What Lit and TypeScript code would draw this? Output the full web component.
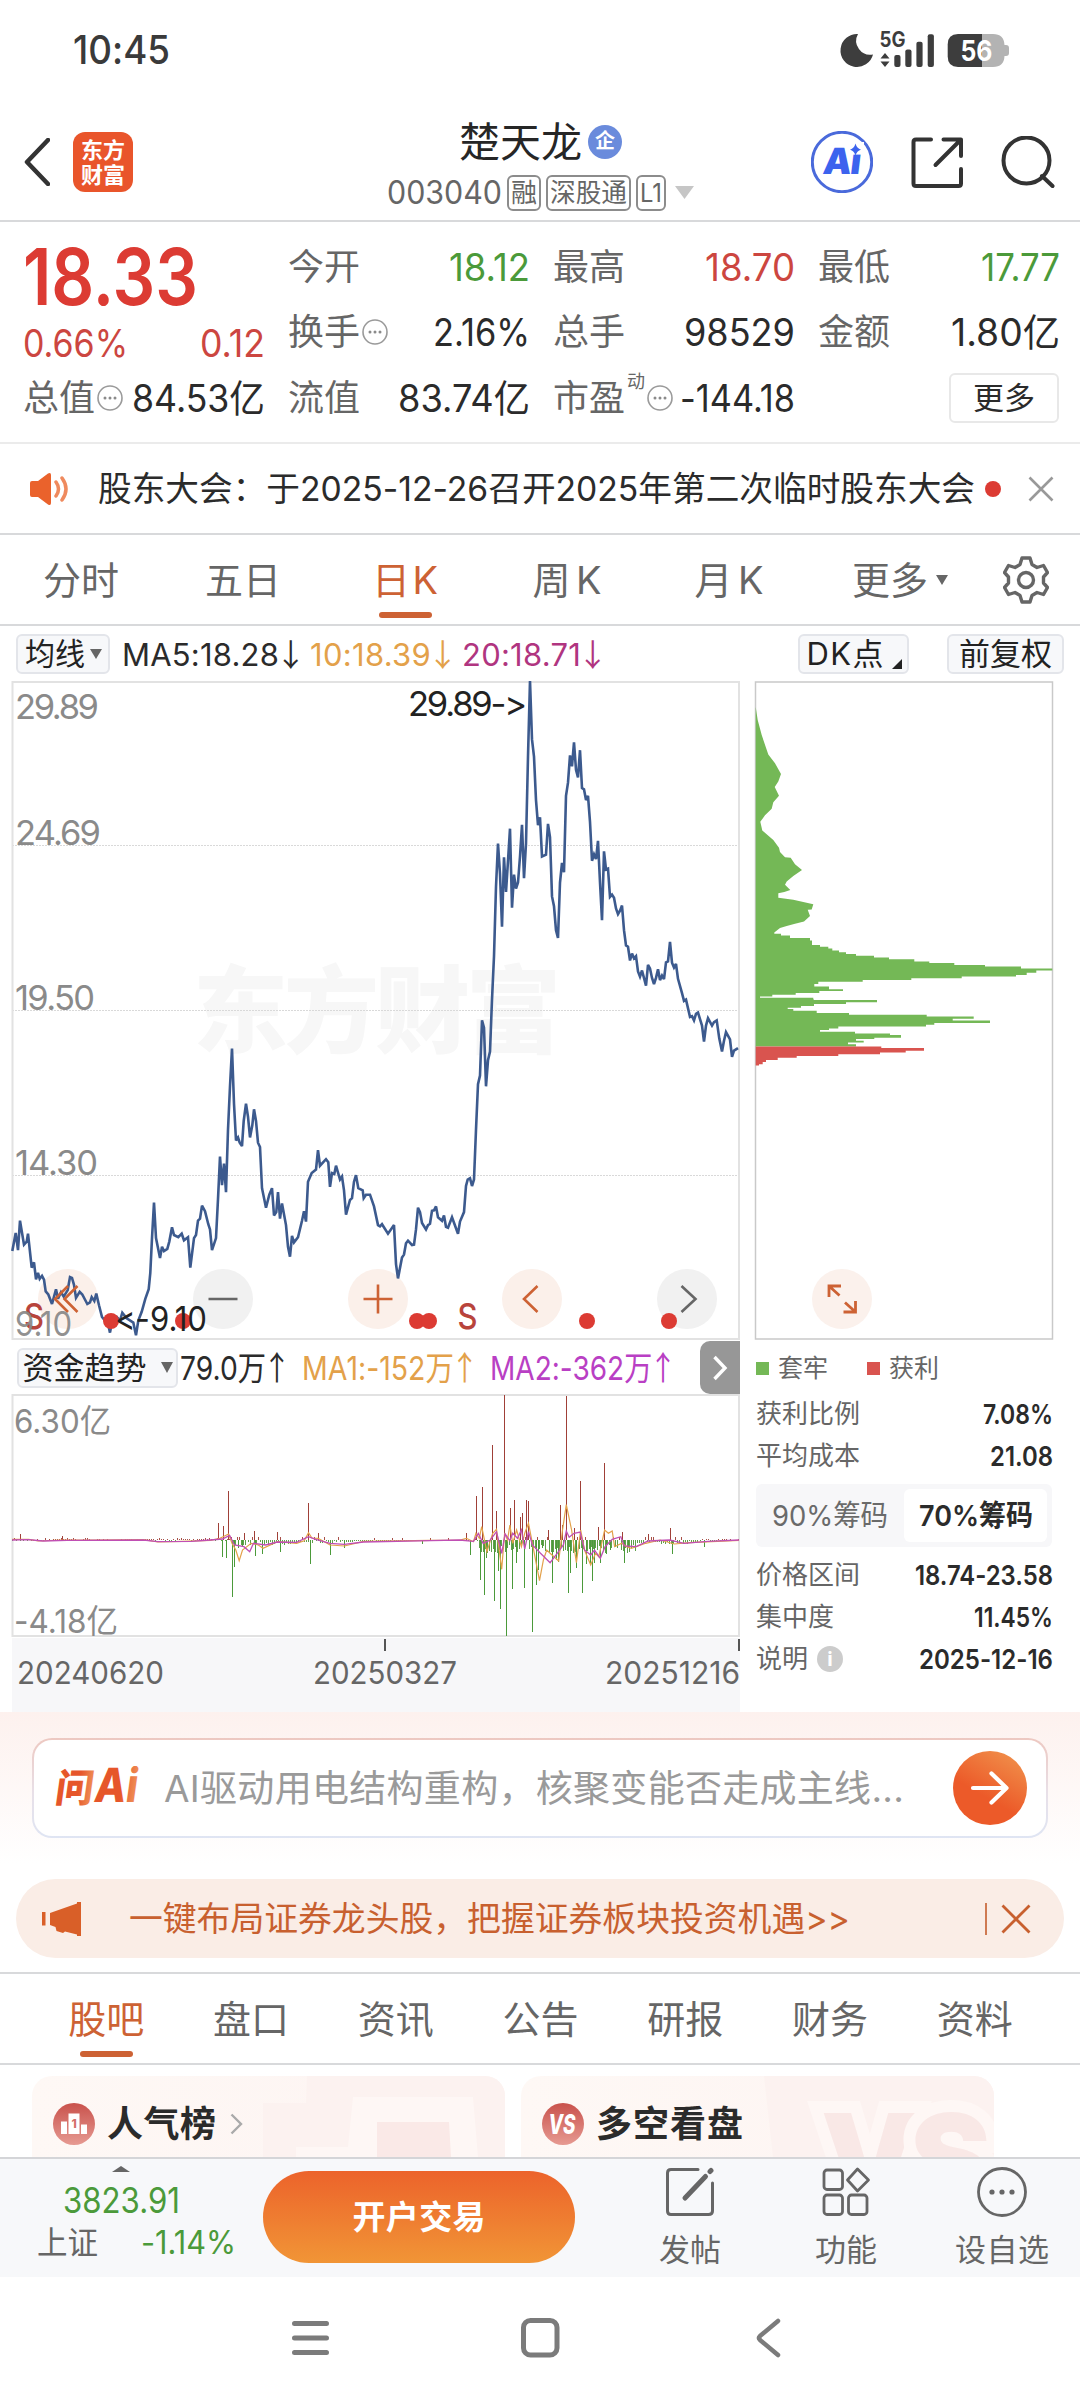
import { LitElement, html, svg, css } from "lit";
import { customElement, property, state, query } from "lit/decorators.js";
import { styleMap } from "lit/directives/style-map.js";

/** A single line of text that fills a given width: tracked out when short, condensed when long. */
@customElement("fit-text")
class FitText extends LitElement {
  @property() text = "";
  @property({ type: Number }) w = 0;
  @state() private spacing = 0;
  @state() private scale = 1;
  @query("span") private span!: HTMLSpanElement;

  static styles = css`
    :host { display: inline-block; white-space: nowrap; line-height: 1; flex: none; }
    .line { display: inline-block; white-space: pre; transform-origin: 0 50%; }
    .arrow { font-family: "Noto Sans CJK SC", sans-serif; margin: 0 -0.14em 0 -0.12em; }
  `;

  firstUpdated() {
    const n = Array.from(this.text).length;
    if (n < 2 || !this.w) return;
    const natural = this.span.getBoundingClientRect().width;
    if (this.w < natural) this.scale = this.w / natural;
    else this.spacing = (this.w - natural) / (n - 1);
    this.style.width = `${this.w}px`;
  }

  render() {
    const body = this.text.split(/([↑↓])/).map((p) =>
      p === "↑" || p === "↓" ? html`<span class="arrow">${p}</span>` : p);
    return html`<span class="line" style=${styleMap({
      letterSpacing: `${this.spacing}px`,
      transform: `scaleX(${this.scale})`,
    })}>${body}</span>`;
  }
}

const PRICE_A = "37,1340 47,1298 54,1338 60,1270 72,1325 80,1318 84,1300 95,1378 102,1366 108,1405 114,1390 119,1404 126,1397 132,1406 137,1433 145,1440 156,1462 168,1428 174,1450 183,1435 191,1445 203,1430 210,1400 216,1402 222,1418 228,1448 239,1434 247,1440 262,1462 270,1458 275,1446 283,1455 289,1438 297,1465 306,1492 325,1510 330,1528 337,1500 350,1492 360,1500 367,1482 380,1495 400,1505 408,1534 415,1500 425,1480 436,1450 446,1428 451,1390 456,1310 462,1228 468,1310 480,1356 486,1330 492,1340 502,1335 508,1318 516,1285 522,1303 535,1308 545,1300 552,1315 564,1308 571,1378 582,1310 588,1303 594,1270 600,1265 606,1235 615,1248 625,1278 630,1290 636,1338 648,1310 654,1220 660,1122 666,1188 672,1138 678,1204 684,1060 690,960 696,873 702,1000 708,1085 714,1078 719,1090 726,1098 731,1040 738,1000 744,1030 750,1078 757,1050 762,1013 768,1040 774,1090 780,1100 786,1195 798,1240 808,1210 816,1195 822,1258 829,1250 834,1204 840,1265 846,1230 858,1280 864,1330 870,1353 876,1305 882,1320 894,1308 906,1270 912,1248 918,1272 924,1180 935,1160 948,1152 954,1107 960,1143 978,1128 985,1135 990,1192 996,1160 1003,1162 1008,1143 1020,1175 1026,1168 1032,1200 1038,1256 1050,1222 1056,1218 1062,1180 1068,1165 1075,1195 1088,1200 1091,1218 1098,1210 1110,1210";
const PRICE_B = "12,1237 24,1280 30,1283 36,1278 54,1300 72,1280 78,1370 84,1403 96,1355 102,1348 108,1322 114,1316 126,1326 132,1325 138,1290 144,1240 150,1250 156,1275 168,1290 174,1280 180,1277 186,1247 192,1246 198,1237 204,1262 216,1270 222,1258 228,1284 234,1286 246,1262 264,1300 270,1272 282,1250 288,1190 293,1175 300,1172 306,1190 312,1175 318,1060 324,955 330,935 336,808 342,825 348,960 354,900 360,880 366,760 372,660 378,500 384,400 390,470 396,592 402,432 408,512 414,440 420,366 426,548 432,472 438,504 444,490 450,430 456,357 462,480 468,400 474,200 480,25 486,160 492,200 498,300 504,358 510,340 516,430 528,426 534,355 540,385 546,522 552,545 558,600 564,618 570,490 576,445 582,466 588,290 594,260 600,197 606,222 612,167 618,230 624,248 630,185 636,272 642,275 648,300 654,290 660,350 666,440 672,425 678,436 684,394 690,490 696,577 702,418 708,460 714,458 720,523 726,518 732,525 738,550 744,563 750,555 756,543 762,600 768,635 774,638 780,670 786,654 792,665 798,660 804,695 810,707 816,693 828,728 834,680 840,688 846,710 852,724 858,710 864,690 870,715 876,705 882,713 888,674 894,672 900,627 906,675 912,686 918,678 924,712 936,745 942,763 948,760 960,800 966,798 972,808 978,793 984,790 996,820 1002,857 1008,820 1014,803 1026,820 1032,812 1040,808 1048,850 1056,880 1062,855 1068,835 1080,852 1086,892 1092,878 1104,872";

const pts = (s: string) => s.split(" ").map((p) => p.split(",").map(Number) as [number, number]);
const priceLine = [...pts(PRICE_A), ...pts(PRICE_B).map(([x, y]) => [x + 1110, y])]
  .map(([x, y]) => `${(x / 3).toFixed(1)},${(y / 2.306 + 670).toFixed(1)}`).join(" ");

const CHIP_TOP = pts("47,85 53,115 65,150 85,195 105,215 123,240 115,257 104,270 117,290 100,305 95,320 75,335 61,350 67,370 100,392 117,410 120,420 135,432 152,433 165,448 186,461 160,475 140,488 135,495 151,507 133,512 115,515 115,525 132,527 160,530 190,535 220,540 215,552 203,553 210,567 192,580 165,585 140,590 120,595 103,605");
const CHIP_STEP = pts("123,608 150,612 210,618 216,624 216,630 240,634 265,638 277,642 297,647 318,651 348,655 402,659 447,663 523,667 568,672 643,676 735,680 843,684 937,688 889,693 860,698 828,703 665,707 514,711 368,715 235,719 223,724 267,730 309,736 238,740 167,745 97,749 60,753 220,756 222,760 411,761 318,766 222,770 183,775 143,779 160,782 230,786 327,791 560,795 701,799 638,804 750,808 583,814 558,818 295,822 267,827 240,830 345,834 450,838 483,842 403,848 348,851 371,855 324,859 348,863 348,868");
const CHIP_RED = pts("424,868 552,872 497,878 420,882 295,886 170,890 113,894 78,899 68,904 57,909 47,912");
const cx = (x: number) => (740 + x / 3).toFixed(1);
const cy = (y: number) => (670 + y / 2.306).toFixed(1);
const steps = (a: [number, number][]) => a.map(([x, y]) => `V${cy(y)}H${cx(x)}`).join("");
const greenChips = `M${cx(47)},${cy(85)}` + CHIP_TOP.map(([x, y]) => `L${cx(x)},${cy(y)}`).join("") + steps(CHIP_STEP) + `H${cx(47)}Z`;
const redChips = `M${cx(47)},${cy(868)}` + steps(CHIP_RED) + "Z";

const FUND_IN = pts("43,612 131,618 457,579 468,588 478,483 511,609 531,603 581,605 645,520 666,610 975,609 996,499 1009,471 1030,345 1038,543 1055,195 1067,533 1076,509 1088,562 1092,549 1101,510 1105,513 1147,600 1172,525 1176,585 1184,198 1201,595 1214,453 1251,591 1264,399 1301,607 1356,612 1402,594");
const FUND_OUT = pts("465,681 473,683 486,800 490,710 498,655 507,652 535,678 548,672 586,665 649,703 691,674 720,655 883,643 984,674 1005,749 1013,795 1017,683 1034,812 1042,722 1046,836 1059,917 1072,776 1080,700 1097,773 1113,906 1122,765 1126,720 1134,655 1155,758 1163,690 1167,695 1188,789 1193,730 1205,713 1217,789 1226,703 1234,705 1239,752 1243,700 1255,700 1268,672 1276,660 1306,700 1314,655 1406,671 1473,652");
const MA_FAST = pts("25,628 60,628 80,633 130,630 200,630 300,629 330,636 380,634 440,631 460,625 478,612 485,640 493,660 500,692 507,660 525,640 540,645 550,655 580,635 620,640 636,632 645,608 652,624 665,625 690,645 720,648 760,634 900,631 960,631 975,625 990,635 995,610 1002,625 1007,590 1018,665 1030,610 1038,598 1049,718 1055,610 1061,630 1066,585 1072,640 1080,600 1090,650 1097,610 1105,580 1113,640 1128,752 1136,690 1143,660 1150,670 1168,693 1176,600 1184,524 1195,600 1205,698 1214,600 1222,660 1235,705 1245,670 1252,680 1264,600 1272,610 1280,603 1285,650 1300,640 1310,650 1320,655 1350,640 1380,630 1410,642 1440,638 1500,634 1545,631");
const MA_SLOW = pts("25,630 60,629 90,633 140,631 300,630 330,635 400,634 440,630 465,627 480,616 490,645 510,650 522,665 530,640 555,645 580,636 620,637 645,620 660,628 690,640 720,643 760,636 900,632 960,630 990,634 1000,610 1010,640 1025,630 1038,605 1049,670 1056,612 1066,632 1072,610 1082,625 1090,600 1097,657 1105,605 1113,645 1130,670 1150,698 1165,670 1178,645 1184,603 1190,622 1200,610 1213,606 1222,660 1235,675 1243,660 1255,685 1265,650 1280,628 1298,620 1305,648 1330,650 1355,633 1400,630 1430,640 1480,634 1545,630");
const fx = (x: number) => (x / 2.0907).toFixed(1);
const fy = (y: number) => (1330 + y / 3).toFixed(1);
const line = (a: [number, number][]) => a.map(([x, y]) => `${fx(x)},${fy(y)}`).join(" ");

/** Small day-to-day flows that fill the space between the large spikes. */
const noise = Array.from({ length: 362 }, (_, i) => {
  const x = 27 + i * 4.2;
  const r = Math.abs(Math.sin(i * 12.9898) * 43758.5453) % 1;
  let amp = 5;
  if (x > 484 && x < 760) amp = 22 - (x - 484) / 18;
  else if (x >= 1000 && x < 1330) amp = 48;
  else if (x >= 1330 && x < 1460) amp = 14;
  const up = x > 484 && x < 1460 ? r > 0.84 : r > 0.5;
  return { x, up, h: (0.3 + r * 0.7) * (up ? Math.min(amp, 9) : amp) };
});

const dots = svg`<circle cx="8" cy="13" r="1.5"/><circle cx="13" cy="13" r="1.5"/><circle cx="18" cy="13" r="1.5"/>`;
const moreIcon = html`<svg class="more-ic" viewBox="0 0 26 26" width="26" height="26"><circle cx="13" cy="13" r="12" fill="none" stroke="#9a9a9a" stroke-width="1.6"/><g fill="#8a8a8a">${dots}</g></svg>`;
const tri = (w: number, h: number, c: string) => html`<svg width=${w} height=${h} viewBox="0 0 10 10" preserveAspectRatio="none"><path d="M0 0H10L5 10Z" fill=${c}/></svg>`;
const ft = (text: string, w: number, cls = "") => html`<fit-text class=${cls} .text=${text} .w=${w}></fit-text>`;

@customElement("app-root")
class AppRoot extends LitElement {
  static styles = css`
    :host {
      display: block; width: 1080px; height: 2400px; overflow: hidden; background: #fff;
      color: #2b2b2b; line-height: 1;
      font-family: Inter, "Noto Sans CJK SC", sans-serif;
      font-feature-settings: "calt" 0;
    }
    * { box-sizing: border-box; }
    svg { display: block; flex: none; }
    .cjk { font-family: "Noto Sans CJK SC", sans-serif; }
    .row { display: flex; align-items: center; }
    .status { display: flex; justify-content: space-between; align-items: center; height: 100px; padding: 0 64px 0 73px; color: #3a3a3a; }
    .time { font-size: 40px; font-weight: 500; }

    .header { display: grid; grid-template-columns: 1fr auto 1fr; align-items: center; height: 122px; padding: 4px 25px 0 22px; border-bottom: 2px solid #d8d9db; }
    .logo { margin-left: 23px; width: 60px; height: 60px; border-radius: 12px; background: #e9552b; color: #fff; font-weight: 700; font-size: 22px; line-height: 25px; text-align: center; padding-top: 4px; }
    .titles { display: flex; flex-direction: column; align-items: center; padding: 8px 0 0 4px; }
    .title { height: 42px; font-size: 41px; color: #262626; gap: 6px; }
    .qi { width: 34px; height: 34px; border-radius: 50%; background: #6a8bdc; color: #fff; font-size: 20px; font-weight: 700; line-height: 32px; text-align: center; }
    .code { margin-top: 11px; height: 37px; gap: 5px; font-size: 32px; color: #666; }
    .tag { display: flex; align-items: center; justify-content: center; border: 2px solid #8c8c8c; border-radius: 6px; height: 36px; padding: 0 2px; font-size: 26px; }
    .code svg { margin-left: 4px; }
    .acts { justify-content: flex-end; gap: 38px; }

    .quote { display: flex; gap: 25px; height: 222px; padding: 12px 0 0 23px; border-bottom: 2px solid #ebebeb; font-size: 38px; }
    .col { width: 240px; }
    .cell { display: flex; justify-content: space-between; align-items: center; height: 65.5px; }
    .cell > fit-text:last-child { margin-right: -2px; }
    .cell.p2 { height: 46px; }
    .cell.p3 { height: 63px; }
    .price { display: flex; align-items: center; height: 86px; font-size: 78px; font-weight: 600; color: #dc3b33; }
    .lab { display: flex; align-items: center; color: #666; font-size: 36px; gap: 2px; }
    .sup { font-size: 18px; align-self: flex-start; margin-top: -7px; }
    .red { color: #cc4640; } .green { color: #4b9a3a; }
    .more { margin-left: auto; margin-right: -1px; width: 110px; height: 50px; border: 2px solid #e8e8e8; border-radius: 6px; display: flex; align-items: center; justify-content: center; font-size: 31px; }

    .notice { display: flex; align-items: center; height: 91px; padding: 0 26px 0 29px; border-bottom: 2px solid #d8d9db; font-size: 34px; }
    .notice fit-text { margin-left: 27px; }
    .notice .rd { width: 16px; height: 16px; border-radius: 50%; background: #dc3b33; margin: 0 27px 0 10px; }

    .tabs { display: flex; align-items: center; height: 91px; font-size: 38px; color: #666; border-bottom: 2px solid #d8d9db; }
    .tab { position: relative; display: flex; justify-content: center; align-items: center; width: 162px; height: 100%; }
    .tabs .drop { padding-left: 18px; }
    .tab svg { margin-left: 8px; }
    .on { color: #cd6234; }
    .on::after { content: ""; position: absolute; left: 50%; bottom: 6px; width: 53px; height: 6px; margin-left: -26.5px; border-radius: 3px; background: #cd6234; }
    .gear { margin-left: 31px; }

    .tools { display: flex; align-items: center; height: 55px; padding: 0 16px; font-size: 31px; }
    .btn { display: flex; align-items: center; justify-content: center; height: 40px; border: 2px solid #e3e5ea; border-radius: 6px; background: #f7f8fa; font-size: 31px; color: #222; }
    .b1 { width: 94px; gap: 5px; margin-right: 12px; }
    .b2 { width: 111px; margin-left: auto; margin-right: 38px; padding-left: 1px; }
    .b2 svg { align-self: flex-end; margin: 0 0 3px 8px; }
    .b3 { width: 117px; }
    .o { color: #e3a14a; margin-left: 8px; } .m { color: #b03580; margin-left: 8px; } .v { color: #b93fc4; }

    .charts { display: flex; height: 1031px; }
    .left { width: 740px; }
    .right { width: 340px; }
    .fundhead { display: flex; align-items: center; height: 53px; padding-left: 17px; font-size: 33px; }
    .fundhead .o, .fundhead .v { margin-left: 15px; }
    .b4 { width: 161px; gap: 14px; margin-right: 2px; font-size: 31px; }
    .next { display: flex; align-items: center; justify-content: center; width: 40px; height: 53px; margin-left: auto; border-radius: 10px 0 0 10px; background: #979797; }
    .axis { position: relative; display: flex; justify-content: space-between; height: 74px; margin-left: 12px; padding: 18px 0 0 5px; background: #f7f7f9; font-size: 31.5px; color: #666; }
    .axis::before, .axis::after { content: ""; position: absolute; top: 1px; width: 2px; height: 12px; background: #555; }
    .axis::before { left: 372px; } .axis::after { right: 0; }
    .axis fit-text { line-height: 34px; }

    .legend { display: flex; align-items: center; height: 52px; padding: 2px 0 0 16px; font-size: 25px; color: #666; }
    .sq { width: 13px; height: 13px; margin-right: 9px; background: #74b856; }
    .sq.r { background: #d9544f; margin-left: 39px; }
    .info { display: flex; align-items: center; justify-content: space-between; height: 42px; width: 297px; margin-left: 16px; font-size: 26px; color: #666; }
    .info b { font-weight: 600; font-size: 27px; color: #2b2b2b; display: flex; }
    .info > span { display: flex; align-items: center; }
    .i { width: 26px; height: 26px; border-radius: 50%; background: #ccc; color: #fff; font-size: 20px; font-weight: 700; line-height: 26px; text-align: center; margin-left: 9px; }
    .seg { display: flex; align-items: center; width: 296px; height: 63px; margin: 7px 0 7px 16px; background: #f7f7f9; border-radius: 6px; font-size: 29px; color: #6a6a6a; padding-right: 5px; }
    .seg div { display: flex; align-items: center; justify-content: center; width: 148px; height: 53px; }
    .seg .sel { width: 143px; background: #fff; border-radius: 6px; color: #2b2b2b; font-weight: 600; }

    .ai { height: 152px; padding: 26px 32px 0; background: linear-gradient(#fdf1ee, #fff); }
    .aibox { display: flex; align-items: center; height: 100px; padding: 0 19px 0 18px; border: 2px solid transparent; border-radius: 20px; background: linear-gradient(#fff, #fff) padding-box, linear-gradient(#edc8c1, #e8e0e8 55%, #dfe5f3) border-box; font-size: 37px; color: #9a9a9a; }
    .aibox .q { margin-left: 20px; }
    .go { display: flex; align-items: center; justify-content: center; width: 74px; height: 74px; margin-left: auto; border-radius: 50%; background: linear-gradient(30deg, #ec5a29 40%, #f1974f); }

    .promo { display: flex; align-items: center; width: 1048px; height: 79px; margin: 15px 16px 14px; border-radius: 39.5px; padding: 0 33px 0 25px; background: #faede6; color: #c8602f; font-size: 34px; }
    .promo fit-text { margin-left: 47px; }
    .promo i { width: 2px; height: 32px; margin: 0 14px 0 auto; background: #cf7a52; }

    .tabs2 { display: flex; height: 93px; padding: 1px 33px 0 34px; border-top: 2px solid #d8d9db; border-bottom: 2px solid #d8d9db; font-size: 38px; color: #666; }
    .tabs2 .tab { width: 144.8px; }
    .cards { display: flex; gap: 16px; height: 92px; padding: 11px 0 0 32px; overflow: hidden; }
    .card { position: relative; display: flex; align-items: center; width: 473px; height: 81px; padding: 14px 0 0 21px; border-radius: 20px 20px 0 0; background: linear-gradient(90deg, #fef8f5, #fdf4f2); overflow: hidden; font-size: 36px; font-weight: 700; color: #2b2b2b; }
    .card .deco { position: absolute; left: 0; top: 0; }
    .card > :not(.deco) { position: relative; }
    .card fit-text { margin: 0 14px 0 12px; }

    .bottom { display: flex; height: 120px; background: #f7f8fa; border-top: 2px solid #d4d5d8; color: #666; }
    .index { width: 263px; padding: 7px 0 0 37px; }
    .index svg { margin-left: 75px; }
    .index .a { margin: 11px 0 0 26px; font-size: 35px; height: 30px; }
    .index .b { display: flex; align-items: center; gap: 43px; margin-top: 14px; font-size: 32px; }
    .trade { display: flex; align-items: center; justify-content: center; width: 312px; height: 92px; margin-top: 12px; border-radius: 46px; background: linear-gradient(#ec632b, #f19536); color: #fff; font-size: 33px; font-weight: 600; }
    .acts2 { display: flex; padding-left: 37px; }
    .act { display: flex; flex-direction: column; align-items: center; width: 156px; padding-top: 8px; font-size: 31px; }
    .act fit-text { margin-top: 17px; }
    .nav { height: 123px; }
  `;

  private cell(label: unknown, value: unknown, cls = "") {
    return html`<div class="cell ${cls}"><span class="lab">${label}</span>${value}</div>`;
  }

  private topBar() {
    return html`
      <div class="status">
        ${ft("10:45", 97, "time")}
        <svg width="180" height="42" viewBox="836 28 180 42">
          <g fill="#3d3d3d">
            <path d="M858 33A16.5 16.5 0 1 0 873 53.500A14 14 0 0 1 858 33Z"/>
            <text x="879.500" y="45.500" font-size="21" font-weight="700" textLength="26" lengthAdjust="spacingAndGlyphs" font-family="Inter">5G</text>
            <path d="M885 52L889.500 57.500H880.500ZM885 66L889.500 60.500H880.500Z"/>
            <rect x="894.300" y="54" width="6.200" height="12" rx="2"/><rect x="905.300" y="48.500" width="6.200" height="17.500" rx="2"/>
            <rect x="916.400" y="40.700" width="6.200" height="25.300" rx="2"/><rect x="927.700" y="33.300" width="6.200" height="32.700" rx="2"/>
          </g>
          <path d="M982 33H993Q1004 33 1004.500 44H1006Q1009 44 1009 47V52Q1009 55 1006 55H1004.500Q1004 66 993 66H982Z" fill="#b3b3b3"/>
          <path d="M982 33H958Q947.700 33 947.700 43.500V55.500Q947.700 66 958 66H982Z" fill="#3d3d3d"/>
          <text x="960.500" y="59.500" font-size="28" font-weight="700" fill="#fff" textLength="32" lengthAdjust="spacingAndGlyphs" font-family="Inter">56</text>
        </svg>
      </div>
      <div class="header">
        <div class="row">
          <svg width="28" height="48" viewBox="0 0 28 48"><path d="M26 2L5 24L26 46" fill="none" stroke="#333" stroke-width="4.500" stroke-linecap="round" stroke-linejoin="round"/></svg>
          <div class="logo cjk">东方<br>财富</div>
        </div>
        <div class="titles">
          <div class="title row"><span>楚天龙</span><span class="qi">企</span></div>
          <div class="code row">${ft("003040", 115)}<span class="tag">融</span><span class="tag">${ft("深股通", 77)}</span><span class="tag">${ft("L1", 22)}</span>${tri(19, 13, "#c6c6c6")}</div>
        </div>
        <div class="acts row">
          <svg width="62" height="62" viewBox="0 0 62 62"><circle cx="31" cy="31" r="29.700" fill="none" stroke="#4a6adb" stroke-width="3"/>
            <g transform="translate(11 43) skewX(-7)"><text x="0" y="0" font-family="Inter" font-weight="900" font-size="36" fill="#3c63ee" textLength="38">Ai</text></g>
            <rect x="37" y="11" width="16" height="12.500" fill="#fff"/><path d="M44.500 12.500Q45.800 17.500 50 18.700Q45.800 20 44.500 24.500Q43.200 20 39 18.700Q43.200 17.500 44.500 12.500Z" fill="#3c63ee"/></svg>
          <svg width="52" height="52" viewBox="911 136 52 52" fill="none" stroke="#333" stroke-width="4" stroke-linecap="round" stroke-linejoin="round"><path d="M931 139.500H916Q913.500 139.500 913.500 142V183.500Q913.500 186 916 186H958.500Q961 186 961 183.500V169M943.500 139.500H961V156M960 140.500L935.500 165"/></svg>
          <svg width="54" height="52" viewBox="1001 136 54 52" fill="none" stroke="#333" stroke-width="4" stroke-linecap="round"><circle cx="1026.500" cy="160.500" r="23"/><path d="M1042 176L1052.500 186"/></svg>
        </div>
      </div>`;
  }

  private quote() {
    return html`
      <div class="quote">
        <div class="col">
          <div class="price">${ft("18.33", 175)}</div>
          <div class="cell p2 red">${ft("0.66%", 105)}${ft("0.12", 65)}</div>
          ${this.cell(html`总值${moreIcon}`, ft("84.53亿", 133), "p3")}
        </div>
        <div class="col">
          ${this.cell("今开", ft("18.12", 81, "green"))}
          ${this.cell(html`换手${moreIcon}`, ft("2.16%", 97))}
          ${this.cell("流值", ft("83.74亿", 132))}
        </div>
        <div class="col">
          ${this.cell("最高", ft("18.70", 90, "red"))}
          ${this.cell("总手", ft("98529", 111))}
          ${this.cell(html`市盈<span class="sup">动</span>${moreIcon}`, ft("-144.18", 115))}
        </div>
        <div class="col">
          ${this.cell("最低", ft("17.77", 79, "green"))}
          ${this.cell("金额", ft("1.80亿", 109))}
          <div class="cell"><span class="more">更多</span></div>
        </div>
      </div>
      <div class="notice">
        <svg width="42" height="34" viewBox="0 0 42 34"><path d="M1 11Q1 9 3 9H9L19 1.500Q22 0 22 3V31Q22 34 19 32.500L9 25H3Q1 25 1 23Z" fill="#ea622c"/><path d="M27 10Q32 17 27 24M33 6Q41 17 33 28" fill="none" stroke="#ef8a5e" stroke-width="3.500" stroke-linecap="round"/></svg>
        ${ft("股东大会：于2025-12-26召开2025年第二次临时股东大会", 877)}
        <span class="rd"></span>
        <svg width="26" height="26" viewBox="0 0 26 26"><path d="M1.500 1.500L24.500 24.500M24.500 1.500L1.500 24.500" stroke="#999" stroke-width="2.600"/></svg>
      </div>
      <div class="tabs">
        <div class="tab">分时</div><div class="tab">五日</div><div class="tab on">${ft("日K", 66)}</div>
        <div class="tab">${ft("周K", 69)}</div><div class="tab">${ft("月K", 69)}</div><div class="tab drop">更多${tri(12, 10, "#666")}</div>
        <svg class="gear" width="46" height="48" viewBox="-23 -24 46 48" fill="none" stroke="#666" stroke-width="3.400" stroke-linejoin="round">
          <path d="M-4 -22H4L6 -15.500L11 -12.500L17.500 -14.500L21.500 -7.500L17.500 -3V3L21.500 7.500L17.500 14.500L11 12.500L6 15.500L4 22H-4L-6 15.500L-11 12.500L-17.500 14.500L-21.500 7.500L-17.500 3V-3L-21.500 -7.500L-17.500 -14.500L-11 -12.500L-6 -15.500Z"/><circle r="7.500"/></svg>
      </div>
      <div class="tools">
        <div class="btn b1">${ft("均线", 60)}${tri(12, 10, "#666")}</div>
        ${ft("MA5:18.28↓", 180)}<span class="o row">${ft("10:18.39↓", 144)}</span><span class="m row">${ft("20:18.71↓", 142)}</span>
        <div class="btn b2">${ft("DK点", 77)}<svg width="10" height="10" viewBox="0 0 10 10"><path d="M10 0V10H0Z" fill="#222"/></svg></div>
        <div class="btn b3">${ft("前复权", 93)}</div>
      </div>`;
  }

  private priceChart() {
    const circle = (x: number, warm: boolean) => svg`<circle cx=${x} cy="1299" r="30" fill=${warm ? "#fbf0ea" : "#f1f1f1"}/>`;
    const lab = (t: string, y: number, w: number) => svg`<text x="15" y=${y} font-size="34.500" fill="#8a8a8a" textLength=${w}>${t}</text>`;
    return html`
      <svg width="740" height="660" viewBox="0 681 740 660" font-family="Inter, 'Noto Sans CJK SC', sans-serif">
        <text x="193" y="1046" font-family="Noto Sans CJK SC" font-weight="900" font-size="95" fill="#f7f7f7" textLength="368">东方财富</text>
        <g stroke="#d9d9d9" stroke-width="1" stroke-dasharray="2 1"><path d="M12 845.500H739M12 1010.500H739M12 1175.500H739"/></g>
        <rect x="12.500" y="682" width="726.500" height="657" fill="none" stroke="#e2e2e2" stroke-width="2"/>
        ${circle(68, true)}${circle(223, false)}${circle(378, true)}${circle(532, true)}${circle(687, false)}
        <polyline points=${priceLine} fill="none" stroke="#3c5a8e" stroke-width="2.600" stroke-linejoin="miter" stroke-miterlimit="3"/>
        ${lab("29.89", 719, 84)}${lab("24.69", 845, 86)}${lab("19.50", 1010, 80)}${lab("14.30", 1175, 83)}
        <text x="408" y="716" font-size="34.500" fill="#222" textLength="119">29.89-&gt;</text>
        <g fill="none" stroke="#cd6234" stroke-width="2.600"><path d="M68 1286L55 1299L68 1312M77.500 1286L64.500 1299L77.500 1312M363.500 1299H392.500M378 1284.500V1313.500M537.500 1286L524 1299L537.500 1312"/></g>
        <g fill="none" stroke="#666" stroke-width="2.600"><path d="M208.500 1299H237.500M681.500 1286L695.500 1299L681.500 1312"/></g>
        <g fill="#dc3b33"><circle cx="111" cy="1321" r="8"/><circle cx="183" cy="1321" r="8"/><circle cx="417" cy="1321" r="8"/><circle cx="429" cy="1321" r="8"/><circle cx="587" cy="1321" r="8"/><circle cx="669" cy="1321" r="8"/></g>
        <g fill="#b8443c" font-size="36" font-weight="500"><text x="24" y="1329" textLength="20" lengthAdjust="spacingAndGlyphs">S</text><text x="457.500" y="1329" textLength="20" lengthAdjust="spacingAndGlyphs">S</text></g>
        <text x="15" y="1335.500" font-size="34" fill="#8a8a8a" fill-opacity=".95" textLength="57" lengthAdjust="spacingAndGlyphs">9.10</text>
        <text x="115" y="1331" font-size="34" fill="#222" textLength="92" lengthAdjust="spacingAndGlyphs">&lt;-9.10</text>
      </svg>`;
  }

  private fundChart() {
    return html`
      <svg width="740" height="244" viewBox="0 1394 740 244" font-family="Inter, 'Noto Sans CJK SC', sans-serif">
        <rect x="12.500" y="1395" width="726.500" height="241" fill="none" stroke="#e2e2e2" stroke-width="2"/>
        <g shape-rendering="crispEdges" stroke-width="1">
          ${noise.map((n) => svg`<path d="M${fx(n.x)} 1540V${1540 + (n.up ? -n.h : n.h) / 3}" stroke=${n.up ? "#a85048" : "#5fa04a"}/>`)}
          ${FUND_IN.map(([x, y]) => svg`<path d="M${fx(x)} 1540V${fy(y)}" stroke="#a04038"/>`)}
          ${FUND_OUT.map(([x, y]) => svg`<path d="M${fx(x)} 1540V${fy(y)}" stroke="#4b9a3a"/>`)}
        </g>
        <polyline points=${line(MA_FAST)} fill="none" stroke="#e3a14a" stroke-width="1.200"/>
        <polyline points=${line(MA_SLOW)} fill="none" stroke="#c04fb4" stroke-width="1.300"/>
        <text x="14" y="1433" font-size="33" fill="#8a8a8a" textLength="97" lengthAdjust="spacingAndGlyphs">6.30亿</text>
        <text x="14" y="1632.500" font-size="33" fill="#8a8a8a" textLength="104" lengthAdjust="spacingAndGlyphs">-4.18亿</text>
      </svg>`;
  }

  private info(label: unknown, value: string, w: number) {
    return html`<div class="info"><span>${label}</span><b>${ft(value, w)}</b></div>`;
  }

  private rightPanel() {
    return html`
      <div class="right">
        <svg width="340" height="660" viewBox="740 681 340 660">
          <rect x="755.500" y="682" width="297" height="657" fill="none" stroke="#c9c9c9" stroke-width="1.500"/>
          <path d=${greenChips} fill="#74b856"/><path d=${redChips} fill="#d9544f"/>
          <circle cx="842" cy="1299" r="30" fill="#fbf1ec"/>
          <path d="M829 1297V1286H841M829 1286L839.500 1295.500M855.500 1301V1312H843.500M855.500 1312L845 1302.500" fill="none" stroke="#cd6234" stroke-width="2.800"/>
        </svg>
        <div class="legend"><span class="sq"></span>套牢<span class="sq r"></span>获利</div>
        ${this.info("获利比例", "7.08%", 70)}
        ${this.info("平均成本", "21.08", 63)}
        <div class="seg"><div>${ft("90%筹码", 116)}</div><div class="sel">${ft("70%筹码", 114)}</div></div>
        ${this.info("价格区间", "18.74-23.58", 138)}
        ${this.info("集中度", "11.45%", 79)}
        ${this.info(html`说明<span class="i">i</span>`, "2025-12-16", 134)}
      </div>`;
  }

  private lower() {
    return html`
      <div class="ai"><div class="aibox">
        <svg width="92" height="44" viewBox="0 0 92 44"><defs><linearGradient id="wen" x1="0" y1="0" x2="1" y2="0"><stop offset=".6" stop-color="#e6562a"/><stop offset="1" stop-color="#f0955c"/></linearGradient></defs>
          <g transform="translate(0 36) skewX(-8)" fill="url(#wen)" font-weight="900"><text x="2" y="0" font-family="Noto Sans CJK SC" font-size="39" textLength="38" lengthAdjust="spacingAndGlyphs">问</text><text x="41" y="0" font-family="Inter" font-size="47" font-weight="800" textLength="43" lengthAdjust="spacingAndGlyphs">Ai</text></g></svg>
        ${ft("AI驱动用电结构重构，核聚变能否走成主线...", 740, "q")}
        <span class="go"><svg width="40" height="36" viewBox="0 0 40 36"><path d="M3 18H36M21.500 3.500L36.500 18L21.500 32.500" fill="none" stroke="#fff" stroke-width="4.200" stroke-linecap="round" stroke-linejoin="round"/></svg></span>
      </div></div>
      <div class="promo">
        <svg width="41" height="36" viewBox="0 0 41 36"><path d="M1 11H4.500V24.500H1ZM9 12L36 2.500V1H40V35H36V33.500L24 30.500L22 32L15.500 30L14.500 26L9 24Z" fill="#d95f28"/></svg>
        ${ft("一键布局证券龙头股，把握证券板块投资机遇>>", 721)}
        <i></i>
        <svg width="30" height="30" viewBox="0 0 30 30"><path d="M1.500 1.500L28.500 28.500M28.500 1.500L1.500 28.500" stroke="#c8602f" stroke-width="2.800"/></svg>
      </div>
      <div class="tabs2">
        ${["股吧", "盘口", "资讯", "公告", "研报", "财务", "资料"].map((t, i) => html`<div class="tab ${i ? "" : "on"}">${t}</div>`)}
      </div>
      <div class="cards">
        <div class="card">
          <svg class="deco" width="473" height="81" viewBox="0 0 473 81"><path d="M275 0H473V81H231V27H274Z" fill="#fcf2f0"/><path d="M321 21H441L446 81H264V71H316Z" fill="#fef7f5"/><path d="M345 46H417L419 81H345Z" fill="#fae9e7"/></svg>
          <svg width="42" height="42" viewBox="0 0 42 42"><defs><linearGradient id="g1" x1="0" y1="0" x2="0" y2="1"><stop offset="0" stop-color="#c9524c"/><stop offset="1" stop-color="#e69a92"/></linearGradient></defs><circle cx="21" cy="21" r="21" fill="url(#g1)"/><path d="M8 18.500H14V31H8ZM15.500 10.500H26.500V31H15.500ZM28 21.500H34V31H28Z" fill="#fff"/><text x="18.500" y="25" font-size="12" font-weight="800" fill="#d4706a" font-family="Inter">1</text></svg>
          ${ft("人气榜", 109)}
          <svg width="13" height="22" viewBox="0 0 13 22"><path d="M1.500 1.500L11 11L1.500 20.500" fill="none" stroke="#aaa" stroke-width="2.400"/></svg>
        </div>
        <div class="card">
          <svg class="deco" width="473" height="81" viewBox="0 0 473 81"><path d="M243 0H473V81H252Z" fill="#fcf2f0"/><text x="300" y="126" font-family="Inter" font-weight="900" font-size="122" fill="#f9e8e6" stroke="#fef7f5" stroke-width="24" paint-order="stroke" textLength="170">VS</text></svg>
          <svg width="42" height="42" viewBox="0 0 42 42"><defs><linearGradient id="g2" x1="0" y1="0" x2="0" y2="1"><stop offset="0" stop-color="#c9524c"/><stop offset="1" stop-color="#e69a92"/></linearGradient></defs><circle cx="21" cy="21" r="21" fill="url(#g2)"/><text x="6.500" y="30.500" font-size="27" font-weight="800" font-style="italic" fill="#fff" font-family="Inter" textLength="27" lengthAdjust="spacingAndGlyphs">VS</text></svg>
          ${ft("多空看盘", 147)}
        </div>
      </div>
      <div class="bottom">
        <div class="index">
          <svg width="18" height="6" viewBox="0 0 18 6"><path d="M9 0L18 6H0Z" fill="#666"/></svg>
          <div class="a green">${ft("3823.91", 117)}</div>
          <div class="b"><span>${ft("上证", 61)}</span><span class="green">${ft("-1.14%", 95)}</span></div>
        </div>
        <div class="trade">${ft("开户交易", 133)}</div>
        <div class="acts2">
          <div class="act"><svg width="50" height="50" viewBox="0 0 50 50" fill="none" stroke="#666" stroke-width="3" stroke-linecap="round"><path d="M33 2.500H6Q2.500 2.500 2.500 6V44Q2.500 47.500 6 47.500H43.500Q47.500 47.500 47.500 44V16"/><path d="M40.500 9.500L20 31" stroke-width="5"/><path d="M46 3.500L45 4.500" stroke-width="5"/></svg>${ft("发帖", 62)}</div>
          <div class="act"><svg width="50" height="50" viewBox="0 0 50 50" fill="none" stroke="#666" stroke-width="2.800" stroke-linejoin="round"><rect x="3" y="3" width="18.500" height="19.500" rx="3"/><rect x="3" y="28" width="18.500" height="19.500" rx="3"/><rect x="27.500" y="28" width="18.500" height="19.500" rx="3"/><path d="M36.500 2L47.500 13L36.500 24L26.500 13Z"/></svg>${ft("功能", 62)}</div>
          <div class="act"><svg width="50" height="50" viewBox="0 0 50 50"><circle cx="25" cy="25" r="23.500" fill="none" stroke="#666" stroke-width="2.800"/><g fill="#666"><circle cx="15" cy="25" r="2.600"/><circle cx="25" cy="25" r="2.600"/><circle cx="35" cy="25" r="2.600"/></g></svg>${ft("设自选", 94)}</div>
        </div>
      </div>
      <svg class="nav" width="1080" height="123" viewBox="0 2277 1080 123" fill="none" stroke="#7b7b7b" stroke-width="5" stroke-linecap="round" stroke-linejoin="round">
        <path d="M294.500 2323.500H326.500M294.500 2338H326.500M294.500 2352.500H326.500"/><rect x="523.500" y="2320.500" width="33.500" height="34.500" rx="7"/><path d="M778 2321L760 2336Q758 2338 760 2340L778 2355" stroke-width="4.500"/>
      </svg>`;
  }

  render() {
    return html`
      ${this.topBar()}
      ${this.quote()}
      <div class="charts">
        <div class="left">
          ${this.priceChart()}
          <div class="fundhead">
            <div class="btn b4">${ft("资金趋势", 124)}${tri(12, 11, "#666")}</div>
            ${ft("79.0万↑", 107)}<span class="o row">${ft("MA1:-152万↑", 173)}</span><span class="v row">${ft("MA2:-362万↑", 183)}</span>
            <span class="next"><svg width="16" height="26" viewBox="0 0 16 26"><path d="M2.500 2L13 13L2.500 24" fill="none" stroke="#fff" stroke-width="3.400"/></svg></span>
          </div>
          ${this.fundChart()}
          <div class="axis">${ft("20240620", 147)}${ft("20250327", 144)}${ft("20251216", 135)}</div>
        </div>
        ${this.rightPanel()}
      </div>
      ${this.lower()}`;
  }
}
